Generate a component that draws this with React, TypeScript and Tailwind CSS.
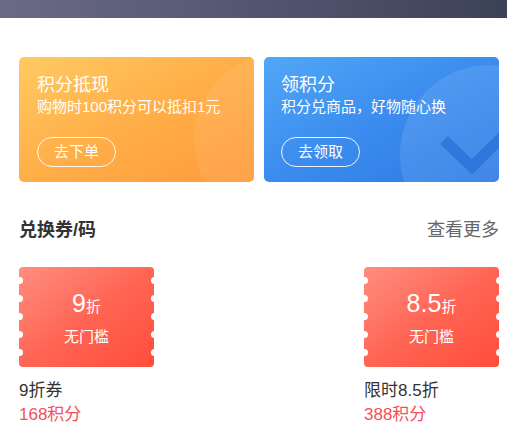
const font = { fontFamily: '"Liberation Sans", "Noto Sans CJK SC", sans-serif' };

const notches = [13, 31, 49, 67, 85];

function Coupon({ value, label, name, points }: { value: string; label: string; name: string; points: string }) {
  return (
    <div className="w-[135px]">
      <div className="relative flex h-[100px] flex-col items-center justify-center rounded-[4px] bg-gradient-to-br from-[#ff8d80] via-[#ff6554] to-[#ff4c3c] text-white">
        {notches.map((top) => (
          <span key={"l" + top} className="absolute left-[-3.5px] h-[7px] w-[7px] rounded-full bg-white" style={{ top: top - 3.5 }} />
        ))}
        {notches.map((top) => (
          <span key={"r" + top} className="absolute right-[-3.5px] h-[7px] w-[7px] rounded-full bg-white" style={{ top: top - 3.5 }} />
        ))}
        <div className="flex items-baseline leading-[30px]">
          <span className="text-[25px]">{value}</span>
          <span className="text-[15px]">折</span>
        </div>
        <div className="mt-[5px] text-[15px] leading-[20px]">{label}</div>
      </div>
      <div className="mt-[12px] text-[17px] leading-[24px] text-[#333]">{name}</div>
      <div className="text-[17px] leading-[24px] text-[#f4505b]">{points}</div>
    </div>
  );
}

export default function App() {
  return (
    <div className="min-h-[447px] bg-white" style={font}>
      <div className="h-[18px] bg-gradient-to-r from-[#6b6a86] via-[#535672] to-[#3c4256]" />

      <div className="pl-[19px] pr-[8px]">
        <div className="mt-[39px] flex gap-[10px]">
          <div className="relative h-[125px] w-[235px] overflow-hidden rounded-[5px] bg-gradient-to-br from-[#ffca62] via-[#ffae48] to-[#ff9a3c] pl-[18px] pt-[16px] text-white">
            <div className="absolute left-[175px] top-[-3px] h-[172px] w-[172px] rounded-full bg-white/[0.07]" />
            <div className="relative text-[18px] leading-[24px]">积分抵现</div>
            <div className="relative text-[15px] leading-[20px]">购物时100积分可以抵扣1元</div>
            <button className="relative mt-[20px] h-[30px] w-[79px] rounded-full border border-white/90 text-[15px]">
              去下单
            </button>
          </div>

          <div className="relative h-[125px] w-[235px] overflow-hidden rounded-[5px] bg-gradient-to-br from-[#51a7f7] via-[#3b8cee] to-[#2c79e4] pl-[17px] pt-[16px] text-white">
            <div className="absolute left-[136px] top-[8px] h-[180px] w-[180px] rounded-full bg-white/10" />
            <svg className="absolute left-[176px] top-[70px]" width="70" height="50" viewBox="0 0 70 50">
              <path d="M4 13 L32 40 L66 6" fill="none" stroke="#2a6fd8" strokeOpacity="0.75" strokeWidth="11" />
            </svg>
            <div className="relative text-[18px] leading-[24px]">领积分</div>
            <div className="relative text-[15px] leading-[20px]">积分兑商品，好物随心换</div>
            <button className="relative mt-[20px] h-[30px] w-[79px] rounded-full border border-white/90 text-[15px]">
              去领取
            </button>
          </div>
        </div>

        <div className="mt-[36px] flex items-center justify-between leading-[24px]">
          <div className="text-[18px] font-bold text-[#333]">兑换券/码</div>
          <div className="text-[18px] text-[#666]">查看更多</div>
        </div>

        <div className="mt-[25px] flex justify-between">
          <Coupon value="9" label="无门槛" name="9折券" points="168积分" />
          <Coupon value="8.5" label="无门槛" name="限时8.5折" points="388积分" />
        </div>
      </div>
    </div>
  );
}
